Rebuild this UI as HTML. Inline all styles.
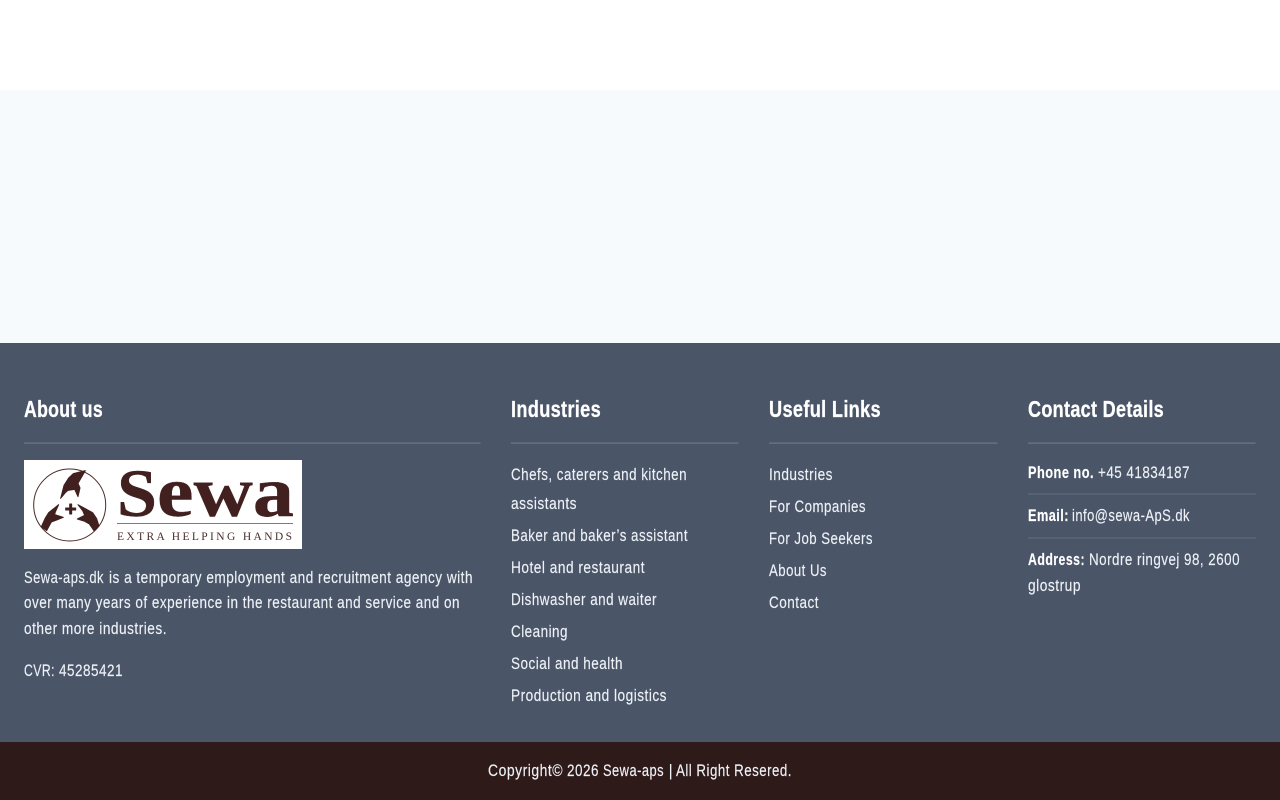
<!DOCTYPE html>
<html lang="en"><head><meta charset="utf-8"><title>Sewa-aps</title>
<style>
html,body{margin:0;padding:0;background:#fff;width:1280px;height:800px;overflow:hidden}
svg{display:block}
text{font-family:"Liberation Sans",sans-serif;font-size:16.5px;letter-spacing:.6px;fill:#eef2f7;stroke:#eef2f7;stroke-width:.15px}
.h{font-size:23px;font-weight:700;fill:#fff;stroke:#fff;stroke-width:.3px;letter-spacing:.4px}
.b{font-weight:700;fill:#fff;stroke:#fff}
.l{font-family:"Liberation Serif",serif;letter-spacing:0;fill:#41201f;stroke:#41201f}
</style></head><body>
<svg width="1280" height="800" viewBox="0 0 1280 800" xmlns="http://www.w3.org/2000/svg">
<rect width="1280" height="800" fill="#fff"/>
<rect y="90" width="1280" height="253" fill="#f7fafc"/>
<rect y="343" width="1280" height="399" fill="#4a5568"/>
<rect y="742" width="1280" height="58" fill="#2f1a1a"/>

<text class="h" x="24" y="417" textLength="79" lengthAdjust="spacingAndGlyphs">About us</text>
<text class="h" x="511" y="417" textLength="90" lengthAdjust="spacingAndGlyphs">Industries</text>
<text class="h" x="769" y="417" textLength="112" lengthAdjust="spacingAndGlyphs">Useful Links</text>
<text class="h" x="1028" y="417" textLength="136" lengthAdjust="spacingAndGlyphs">Contact Details</text>
<g fill="#626e85">
<rect x="24" y="442.300" width="456.500" height="1.700"/>
<rect x="511" y="442.300" width="227.500" height="1.700"/>
<rect x="769" y="442.300" width="228.500" height="1.700"/>
<rect x="1028" y="442.300" width="227.500" height="1.700"/>
</g>
<g fill="#566176">
<rect x="1028" y="493" width="228" height="2"/>
<rect x="1028" y="537" width="228" height="2"/>
</g>

<!-- logo -->
<rect x="24" y="460" width="278" height="89" fill="#fff"/>
<circle cx="69.700" cy="505" r="36" fill="none" stroke="#4b2a2a" stroke-width="1"/>
<g transform="translate(28 464) scale(.3333)" fill="#41201f" stroke="#41201f" stroke-width="3" stroke-linejoin="round">
<path d="M172 20L136 29L122 42L108 64L98 103L112 86L120 79L140 76L150 98L156 72L150 58Z"/>
<path d="M40 188L52 162L62 146L92 122L82 144L80 152L106 160L86 168L70 174L56 200Z"/>
<path d="M213 186L206 164L194 146L150 122L164 140L170 154L148 165L170 172L184 180L198 200Z"/>
<rect x="125" y="120" width="6" height="30"/>
<rect x="113" y="132" width="30" height="6"/>
</g>
<text class="l" x="117" y="516" textLength="40" lengthAdjust="spacingAndGlyphs" style="font-weight:700;font-size:68px;stroke-width:.4px">S</text>
<text class="l" x="157" y="516" textLength="137" lengthAdjust="spacingAndGlyphs" style="font-weight:700;font-size:72px;stroke-width:.4px">ewa</text>
<rect x="117" y="523" width="176" height="1" fill="#8b7574"/>
<text class="l" x="117" y="540" textLength="175" lengthAdjust="spacing" style="font-size:11.500px;stroke-width:0;fill:#4b2e2d">EXTRA HELPING HANDS</text>

<!-- about -->
<text x="24" y="583" textLength="80" lengthAdjust="spacingAndGlyphs">Sewa-aps.dk</text>
<text x="109" y="583" textLength="364" lengthAdjust="spacingAndGlyphs">is a temporary employment and recruitment agency with</text>
<text x="24" y="608" textLength="436" lengthAdjust="spacingAndGlyphs">over many years of experience in the restaurant and service and on</text>
<text x="24" y="634" textLength="143" lengthAdjust="spacingAndGlyphs">other more industries.</text>
<text x="24" y="676" textLength="31" lengthAdjust="spacingAndGlyphs">CVR:</text>
<text x="59" y="676" textLength="64" lengthAdjust="spacingAndGlyphs">45285421</text>

<!-- industries -->
<text x="511" y="480" textLength="176" lengthAdjust="spacingAndGlyphs">Chefs, caterers and kitchen</text>
<text x="511" y="509" textLength="66" lengthAdjust="spacingAndGlyphs">assistants</text>
<text x="511" y="541" textLength="177" lengthAdjust="spacingAndGlyphs">Baker and baker’s assistant</text>
<text x="511" y="573" textLength="134" lengthAdjust="spacingAndGlyphs">Hotel and restaurant</text>
<text x="511" y="605" textLength="146" lengthAdjust="spacingAndGlyphs">Dishwasher and waiter</text>
<text x="511" y="637" textLength="57" lengthAdjust="spacingAndGlyphs">Cleaning</text>
<text x="511" y="669" textLength="112" lengthAdjust="spacingAndGlyphs">Social and health</text>
<text x="511" y="701" textLength="156" lengthAdjust="spacingAndGlyphs">Production and logistics</text>

<!-- useful -->
<text x="769" y="480" textLength="64" lengthAdjust="spacingAndGlyphs">Industries</text>
<text x="769" y="512" textLength="97" lengthAdjust="spacingAndGlyphs">For Companies</text>
<text x="769" y="544" textLength="104" lengthAdjust="spacingAndGlyphs">For Job Seekers</text>
<text x="769" y="576" textLength="58" lengthAdjust="spacingAndGlyphs">About Us</text>
<text x="769" y="608" textLength="50" lengthAdjust="spacingAndGlyphs">Contact</text>

<!-- contact -->
<text class="b" x="1028" y="478" textLength="66" lengthAdjust="spacingAndGlyphs">Phone no.</text>
<text x="1098" y="478" textLength="92" lengthAdjust="spacingAndGlyphs">+45 41834187</text>
<text class="b" x="1028" y="521" textLength="41" lengthAdjust="spacingAndGlyphs">Email:</text>
<text x="1072" y="521" textLength="118" lengthAdjust="spacingAndGlyphs">info@sewa-ApS.dk</text>
<text class="b" x="1028" y="565" textLength="57" lengthAdjust="spacingAndGlyphs">Address:</text>
<text x="1089" y="565" textLength="151" lengthAdjust="spacingAndGlyphs">Nordre ringvej 98, 2600</text>
<text x="1028" y="591" textLength="53" lengthAdjust="spacingAndGlyphs">glostrup</text>

<text x="488" y="776" textLength="75" lengthAdjust="spacingAndGlyphs">Copyright©</text>
<text x="567" y="776" textLength="32" lengthAdjust="spacingAndGlyphs">2026</text>
<text x="603" y="776" textLength="61" lengthAdjust="spacingAndGlyphs">Sewa-aps</text>
<text x="668.500" y="776" style="stroke-width:0">|</text>
<text x="676" y="776" textLength="116" lengthAdjust="spacingAndGlyphs">All Right Resered.</text>
</svg>
</body></html>
